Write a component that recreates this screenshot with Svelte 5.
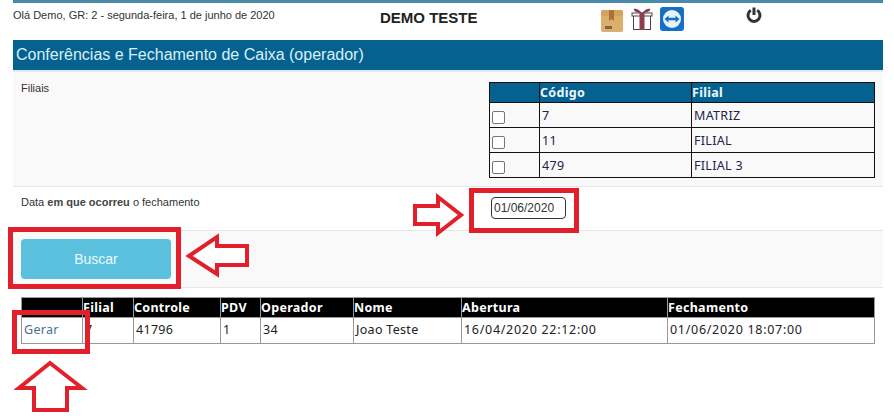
<script>
  const filiais = [
    { codigo: '7', nome: 'MATRIZ' },
    { codigo: '11', nome: 'FILIAL' },
    { codigo: '479', nome: 'FILIAL 3' }
  ];
</script>

<div class="page">
  <header class="top">
    <span class="hello">Olá Demo, GR: 2 - segunda-feira, 1 de junho de 2020</span>
    <strong class="brand">DEMO TESTE</strong>
    <div class="icons">
      <svg class="box" viewBox="0 0 22 22" width="22" height="22" aria-hidden="true">
        <rect x="0" y="0" width="22" height="22" rx="2" fill="#dcb06c"/>
        <rect x="0" y="0" width="22" height="6" rx="2" fill="#d2a25e"/>
        <path d="M8 0h5v11l-2.500-2L8 11z" fill="#a8733a"/>
        <rect x="4" y="16" width="7" height="3" fill="#77664d"/>
      </svg>
      <svg class="gift" viewBox="0 0 22 22" width="22" height="22" aria-hidden="true">
        <rect x="2.500" y="7" width="17" height="14.500" fill="#fff" stroke="#4a4348" stroke-width="1"/>
        <rect x="1" y="5" width="20" height="3" fill="#fff" stroke="#4a4348" stroke-width="1"/>
        <rect x="8.500" y="5" width="5" height="17" fill="#8f3d4a"/>
        <path d="M11 5C8 1 4 0 3 1c-1 2 3 4 8 4zM11 5c3-4 7-5 8-4 1 2-3 4-8 4z" fill="#8f3d4a"/>
      </svg>
      <svg class="tv" viewBox="0 0 24 24" width="24" height="24" aria-hidden="true">
        <rect width="24" height="24" rx="3" fill="#1470c4"/>
        <circle cx="12" cy="12" r="9" fill="#e8f2fa"/>
        <path d="M4.500 12 8.500 8.500V10.800h7V8.500L19.500 12 15.500 15.500V13.200h-7V15.500z" fill="#1470c4"/>
      </svg>
      <svg class="power" viewBox="0 0 16 16" width="16" height="16" aria-hidden="true">
        <path d="M4.800 3.300a6 6 0 1 0 6.400 0" fill="none" stroke="#333" stroke-width="3"/>
        <path d="M8 0.500v7.500" stroke="#333" stroke-width="3"/>
      </svg>
    </div>
  </header>

  <h1 class="title">Conferências e Fechamento de Caixa (operador)</h1>

  <section class="row filiais">
    <label class="lbl" for="f0">Filiais</label>
    <table class="grid branch">
      <thead>
        <tr><th></th><th>Código</th><th>Filial</th></tr>
      </thead>
      <tbody>
        {#each filiais as f, i}
          <tr>
            <td><input id={'f' + i} type="checkbox" /></td>
            <td>{f.codigo}</td>
            <td>{f.nome}</td>
          </tr>
        {/each}
      </tbody>
    </table>
  </section>

  <section class="row date">
    <label class="lbl" for="dt">Data <b>em que ocorreu</b> o fechamento</label>
    <input id="dt" class="dt" type="text" value="01/06/2020" />
  </section>

  <section class="row action">
    <button class="search" type="button">Buscar</button>
  </section>

  <table class="grid result">
    <thead>
      <tr>
        <th></th><th>Filial</th><th>Controle</th><th>PDV</th><th>Operador</th><th>Nome</th><th>Abertura</th><th>Fechamento</th>
      </tr>
    </thead>
    <tbody>
      <tr>
        <td><a href="#gerar">Gerar</a></td>
        <td>7</td><td>41796</td><td>1</td><td>34</td><td>Joao Teste</td>
        <td class="stamp">16/04/2020 22:12:00</td><td class="stamp">01/06/2020 18:07:00</td>
      </tr>
    </tbody>
  </table>
</div>

<!-- Red annotations drawn over the screenshot -->
<div class="mark m-date"></div>
<div class="mark m-search"></div>
<div class="mark m-gerar"></div>
<svg class="arrows" width="894" height="416" viewBox="0 0 894 416" aria-hidden="true">
  <g fill="#fff" stroke="#e2202c" stroke-width="4" stroke-linejoin="miter">
    <path d="M415 206H438V197L461 215 438 233V224H415z"/>
    <path d="M189 256 217 237V246H247V265H217V274z"/>
    <path d="M50 363 82 388H67V410H34V388H19z"/>
  </g>
</svg>

<style>
  :global(body) {
    margin: 0;
    background: #fff;
    font-family: "Liberation Sans", Arial, sans-serif;
    color: #333;
  }
  .page {
    width: 870px;
    margin-left: 13px;
    height: 416px;
    overflow: hidden;
  }
  .top {
    height: 37px;
    border-top: 3px solid #4a89a8;
    display: flex;
    align-items: flex-start;
  }
  .hello {
    width: 367px;
    font-size: 11px;
    line-height: 12px;
    padding-top: 6px;
  }
  .brand {
    width: 221px;
    font-size: 15px;
    line-height: 16px;
    padding-top: 7px;
    color: #222;
  }
  .icons {
    display: flex;
    align-items: flex-start;
  }
  .box { margin: 7px 0 0 0; }
  .gift { margin: 5px 0 0 8px; }
  .tv { margin: 4px 0 0 7px; }
  .power { margin: 4px 0 0 62px; }
  .title {
    margin: 0;
    height: 30px;
    line-height: 30px;
    background: #05618f;
    color: #d8f0f8;
    font-size: 16px;
    font-weight: 400;
    padding-left: 3px;
  }
  .row {
    display: flex;
    align-items: flex-start;
    padding-left: 8px;
    border-bottom: 1px solid #e6e6e6;
  }
  .lbl {
    font-size: 11px;
    line-height: 12px;
    color: #333;
    width: 468px;
    flex: none;
  }
  .lbl b { font-weight: 700; color: #444; }
  .filiais {
    height: 114px;
    background: #f9f9f9;
    border-top: 2px solid #d9edf3;
  }
  .filiais .lbl { padding-top: 10px; }
  .grid {
    border-collapse: collapse;
    table-layout: fixed;
    font-family: "Noto Sans", sans-serif;
    font-size: 12.500px;
    letter-spacing: 0.3px;
  }
  .grid th {
    text-align: left;
    font-weight: 700;
    padding: 0;
    height: 19px;
    line-height: 19px;
    color: #eef7fb;
  }
  .grid td {
    padding: 0 2px;
    color: #222;
  }
  .branch {
    width: 386px;
    margin-top: 10px;
  }
  .branch th, .branch td { border: 1px solid #111; }
  .branch th { background: #05618f; }
  .branch td { height: 24px; color: #22224a; }
  .branch th:nth-child(1) { width: 49px; }
  .branch th:nth-child(2) { width: 151px; }
  .branch input {
    display: block;
    width: 13px;
    height: 13px;
    margin: 4px 0 0 0;
    appearance: none;
    background: #fff;
    border: 1px solid #767676;
    border-radius: 2px;
  }
  .date {
    height: 43px;
    background: #fff;
  }
  .date .lbl { padding-top: 9px; width: 470px; }
  .dt {
    margin-top: 10px;
    width: 69px;
    height: 20px;
    padding: 0 2px;
    border: 1px solid #333;
    border-radius: 4px;
    font: 12px "Liberation Sans", Arial, sans-serif;
    color: #333;
    background: #fff;
  }
  .action {
    height: 56px;
    background: #f9f9f9;
  }
  .search {
    width: 150px;
    height: 40px;
    margin-top: 8px;
    border: 0;
    border-radius: 4px;
    background: #5bc0de;
    color: #e9fbff;
    font: 14px "Liberation Sans", Arial, sans-serif;
  }
  .result {
    width: 854px;
    margin: 9px 0 0 8px;
  }
  .result th, .result td { border: 1px solid #999; }
  .result th { background: #000; color: #fff; height: 19px; }
  .result td { height: 23px; padding-bottom: 2px; }
  .result td.stamp { letter-spacing: 0.7px; }
  .result a { color: #48708c; text-decoration: none; }
  .result th:nth-child(1) { width: 60px; }
  .result th:nth-child(2) { width: 50px; }
  .result th:nth-child(3) { width: 86px; }
  .result th:nth-child(4) { width: 39px; }
  .result th:nth-child(5) { width: 92px; }
  .result th:nth-child(6) { width: 107px; }
  .result th:nth-child(7) { width: 205px; }

  .mark {
    position: absolute;
    border: 5px solid #e2202c;
    box-sizing: border-box;
  }
  .m-date { left: 469px; top: 188px; width: 110px; height: 45px; }
  .m-search { left: 8px; top: 227px; width: 173px; height: 62px; }
  .m-gerar { left: 12px; top: 310px; width: 78px; height: 44px; }
  .arrows {
    position: absolute;
    left: 0;
    top: 0;
    pointer-events: none;
  }
</style>
